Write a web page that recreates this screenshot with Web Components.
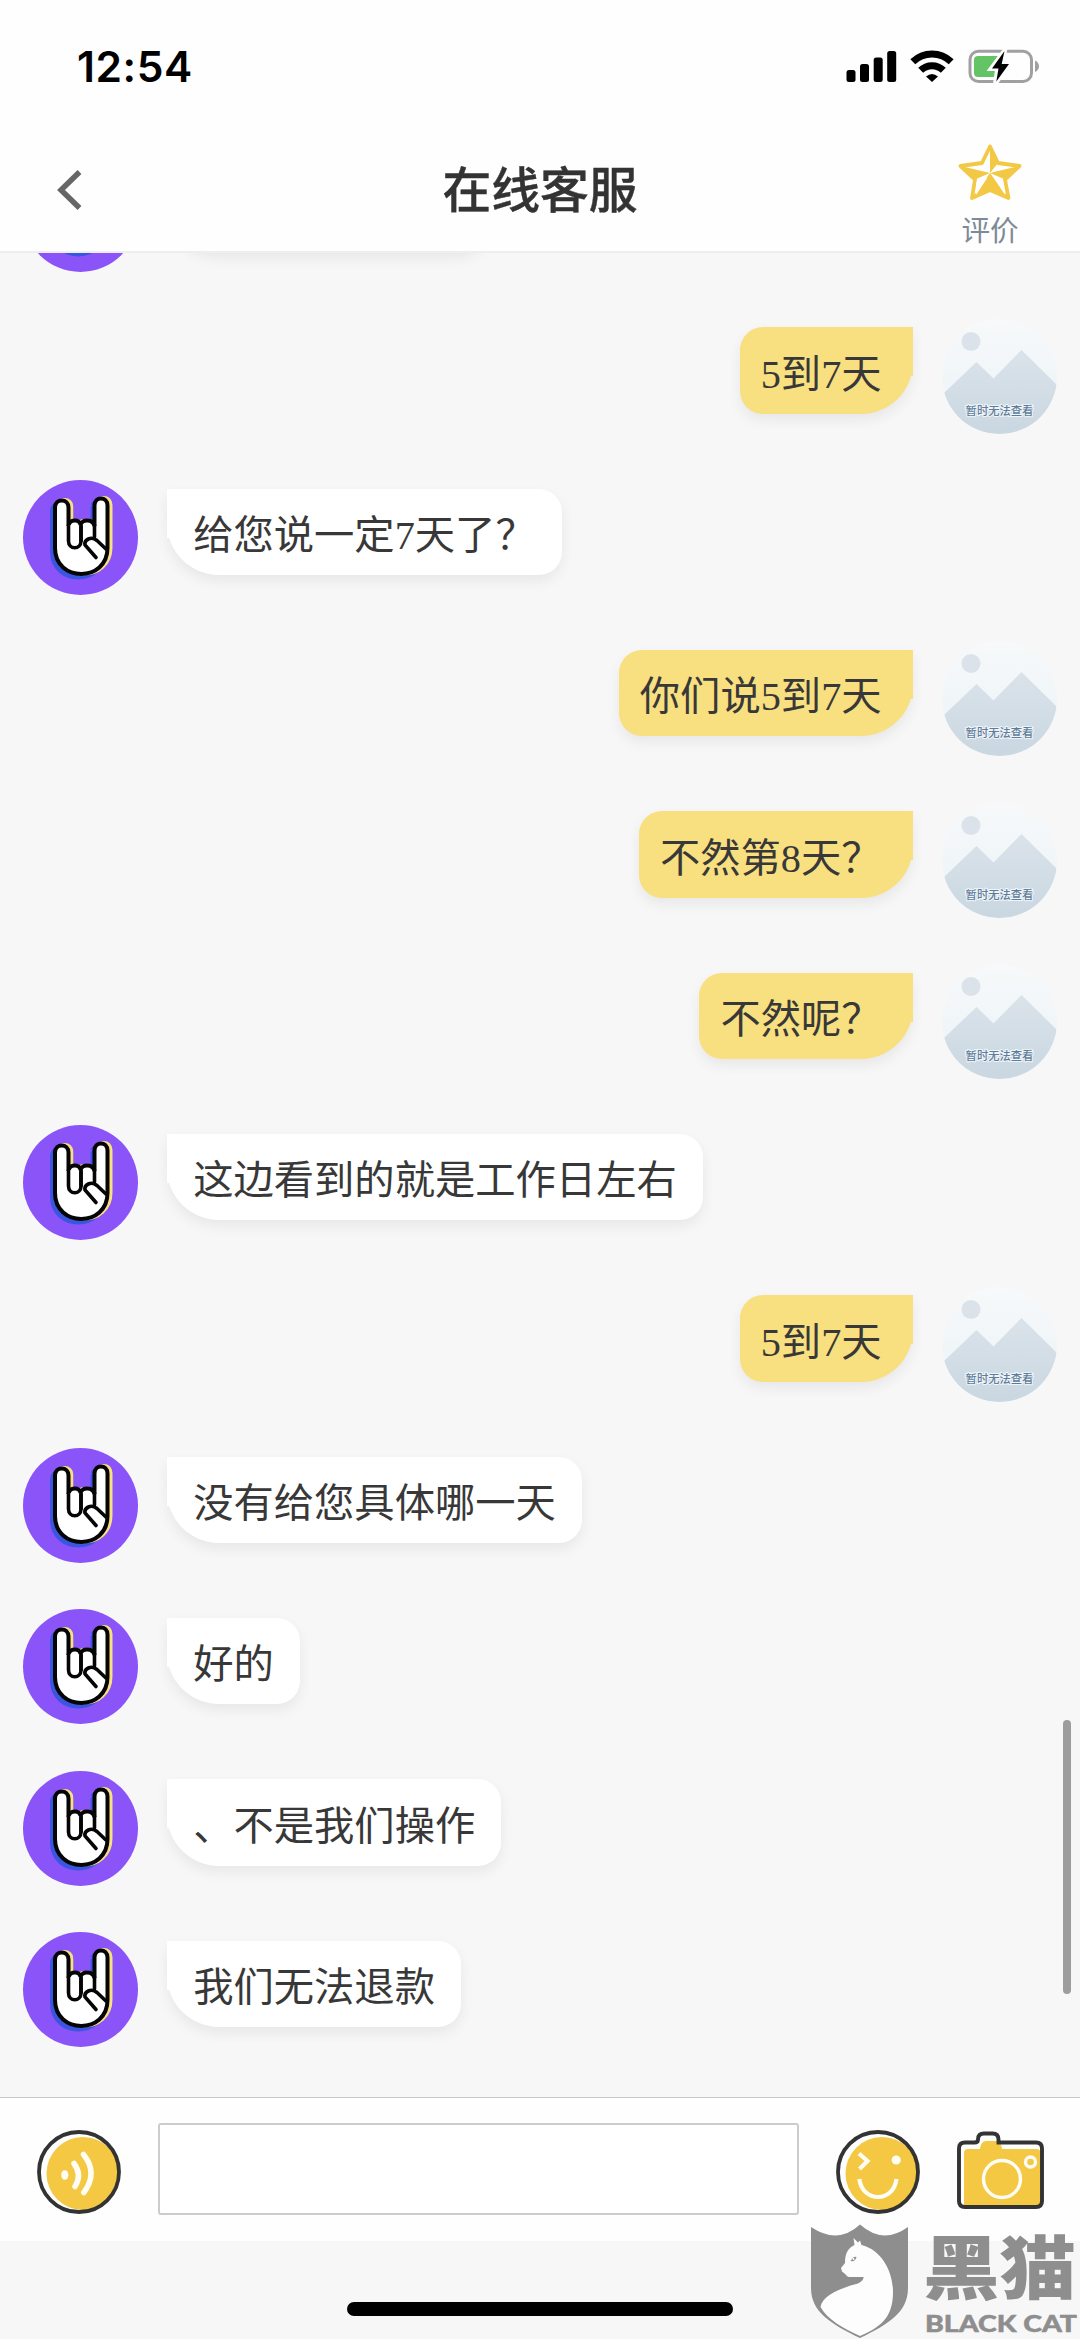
<!DOCTYPE html>
<html lang="zh-CN">
<head>
<meta charset="utf-8">
<title>在线客服</title>
<style>
html,body{margin:0;padding:0;background:#f7f7f7}
body{width:1080px;height:2339px;overflow:hidden}
</style>
</head>
<body>
<chat-app></chat-app>
<script>
function define(name, html) {
  customElements.define(name, class extends HTMLElement {
    constructor() {
      super();
      this.attachShadow({mode: 'open'}).innerHTML = html;
    }
  });
}

define('status-bar', `
<style>
:host{display:flex;justify-content:space-between;height:132px;box-sizing:border-box;padding:0 40px 0 77px;background:#fefefe}
time{font:600 42.5px/52px Inter,sans-serif;color:#000;margin-top:41px;letter-spacing:.55px}
svg{display:block;margin-top:46px}
</style>
<time>12:54</time>
<svg width="196" height="42" viewBox="844 46 196 42">
  <rect x="846.5" y="70" width="9" height="12" rx="2.5"/><rect x="860" y="64" width="9" height="18" rx="2.5"/>
  <rect x="873.7" y="57.5" width="9" height="24.5" rx="2.5"/><rect x="887.2" y="51" width="9" height="31" rx="2.5"/>
  <g fill="none" stroke="#000" stroke-width="7">
    <path d="M912.8 61.800A27.500 27.500 0 0 1 951.200 61.800"/><path d="M920.7 70.300A16 16 0 0 1 943.3 70.300"/>
  </g>
  <path d="M926 76.500Q932 71.500 938 76.500L932 82Z"/>
  <rect x="970" y="51.200" width="61.5" height="30.3" rx="8.500" fill="none" stroke="#a09fa1" stroke-width="3"/>
  <path d="M1035 60.500Q1039 62.500 1039 66.200T1035 72Z" fill="#a09fa1"/>
  <path d="M978 56H1002V77H978Q974 77 974 73V60Q974 56 978 56Z" fill="#63c466"/>
  <path d="M1004.5 48.500L988.500 70H996L994 84H996.500L1012 63H1003.500L1006.500 48.500Z" fill="#fefefe" stroke="#fefefe" stroke-width="2"/>
  <path d="M1004.500 51L992 68.500H998.500L996.300 81.500L1009 64H1001.700Z"/>
</svg>`);

define('nav-bar', `
<style>
:host{display:flex;justify-content:space-between;height:121px;box-sizing:border-box;background:#fefefe;border-bottom:2px solid #efeeee}
.side{width:181px;flex:none}
.back{display:block;margin:36px 0 0 54px}
h1{font:500 48.8px/72px "Noto Sans CJK SC",sans-serif;color:#333;margin:18.500px 0 0;-webkit-text-stroke:.4px #333}
.rate{display:flex;flex-direction:column;align-items:center}
.rate svg{display:block;margin:9px 0 0 2px}
.rate span{font:400 28.600px/34px "Noto Sans CJK SC",sans-serif;color:#7e8a97;margin:11px 0 0 1px}
</style>
<div class="side"><svg class="back" width="32" height="44" viewBox="54 168 32 44"><path d="M79.500 172L61 190L79.500 208" fill="none" stroke="#666" stroke-width="5.500"/></svg></div>
<h1>在线客服</h1>
<div class="side rate">
<svg width="68" height="60" viewBox="956 141 68 60">
  <path d="M990 146.500L998 163L1019.500 166L1005 179.500L1008.500 198L990 190L972 198L975 179.500L960.500 166L982 163Z" fill="#fff" stroke="#f2c845" stroke-width="3.800" stroke-linejoin="round"/>
  <path d="M990 146.500V173L998 163ZM1019.500 166L990 173L1005 179.500ZM1008.500 198L990 173V190ZM972 198L990 173V190ZM960.500 166L975 179.500L990 173Z" fill="#f2c845"/>
  <path d="M976 195L987.500 177.500L976.500 182ZM1005 195L992 175L1003 181.500Z" fill="#fff"/>
</svg>
<span>评价</span></div>`);

define('agent-avatar', `
<style>:host{display:block;width:115px;height:115px;flex:none}svg{display:block}</style>
<svg width="115" height="115" viewBox="0 0 115 115">
  <defs><path id="h" d="M32 27.500C32 18 45.500 18 45.500 27.500V46C46 39 57 38.500 57.500 45C59 38.500 70 39 71.500 46V25.500C71.500 16 84.500 16 84.500 25.500V68C84.500 102.500 32 102.500 32 68Z"/></defs>
  <circle cx="57.500" cy="57.500" r="57.500" fill="#8b54f8"/>
  <use href="#h" transform="translate(-3 3.500)" fill="#3a55e0" stroke="#3a55e0" stroke-width="4"/>
  <use href="#h" transform="translate(3 -.5)" fill="#f8df84" stroke="#f8df84" stroke-width="4"/>
  <path d="M50.500 25V41Q54 38 57 40Q63 36 70 41V25Z" fill="#8b54f8"/>
  <path d="M67.500 27V41H70V25Z" fill="#3a55e0"/>
  <use href="#h" fill="#fff" stroke="#050505" stroke-width="4"/>
  <g fill="#fff" stroke="#050505" stroke-width="3.600" stroke-linecap="round">
    <path d="M45.500 45V61C45.500 70 58 70 58 61V46"/>
    <path d="M58 46V61M71.500 45V57"/>
    <path d="M84 70L74 60.500C68 55.500 61 60 62 65L73 77.500"/>
  </g>
</svg>`);

define('user-avatar', `
<style>:host{display:block;width:115px;height:115px;flex:none}svg{display:block}</style>
<svg width="115" height="115" viewBox="0 0 115 115">
  <defs>
    <linearGradient id="s" x2="0" y2="1"><stop offset="0" stop-color="#f7f9fa"/><stop offset=".6" stop-color="#eff5f8"/></linearGradient>
    <linearGradient id="m" x2="0" y2="1"><stop offset="0" stop-color="#dbe3ea"/><stop offset="1" stop-color="#c9d7e1"/></linearGradient>
    <clipPath id="c"><circle cx="57.500" cy="57.500" r="57.500"/></clipPath>
  </defs>
  <g clip-path="url(#c)">
    <rect width="115" height="115" fill="url(#s)"/>
    <circle cx="29" cy="22.500" r="9.500" fill="#dbe2ea"/>
    <path d="M0 76L34.500 43L51.500 59.500L79.500 31L115 66V115H0Z" fill="url(#m)"/>
  </g>
  <text x="57.500" y="96" text-anchor="middle" font-family="Noto Sans CJK SC,sans-serif" font-size="11.300" font-weight="500" fill="#5f7d99" stroke="#f0f5f9" stroke-width="2" paint-order="stroke">暂时无法查看</text>
</svg>`);

define('chat-message', `
<style>
:host{display:flex;align-items:flex-start;gap:29px;height:161.350px;box-sizing:border-box;padding:0 23px}
:host([from=user]){flex-direction:row-reverse}
.bubble{position:relative;height:86.500px;box-sizing:border-box;margin-top:8.500px;padding:4.500px 26.200px 0;border-radius:0 23px 23px 52px;background:#fff;box-shadow:0 6px 14px rgba(0,0,0,.065);font:400 40.300px/85px "Liberation Serif","Noto Sans CJK SC",serif;color:#383838;white-space:nowrap}
.bubble::before{content:"";position:absolute;top:0;left:0;width:10px;height:49px;background:inherit}
:host([from=user]) .bubble{background:#f8df80;border-radius:23px 0 52px 23px;padding:4.500px 31.400px 0 21px}
:host([from=user]) .bubble::before{left:auto;right:0}
:host([clipped]) .bubble{width:316px}
:host([from=user]) agent-avatar,:host(:not([from=user])) user-avatar{display:none}
</style>
<agent-avatar></agent-avatar><user-avatar></user-avatar>
<div class="bubble"><slot></slot></div>`);

define('chat-list', `
<style>
:host{display:block;position:relative;height:1844px;overflow:hidden;background:#f7f7f7}
.rows{margin-top:-95.700px}
.bar{position:absolute;right:9px;top:1467px;width:8px;height:274px;border-radius:4px;background:#9d9d9d}
</style>
<div class="rows"><slot></slot></div><div class="bar"></div>`);

define('input-bar', `
<style>
:host{display:flex;align-items:flex-start;height:144px;box-sizing:border-box;border-top:1px solid #c9c9c9;background:#fefefe;padding-left:34px}
svg{display:block;flex:none;margin-top:29px}
.field{width:641px;height:92px;box-sizing:border-box;border:2px solid #ccc;border-radius:3px;background:#fff;margin:25px 34px 0 34px}
.cam{margin-left:30px}
</style>
<svg width="90" height="90" viewBox="34 2127 90 90">
  <circle cx="83" cy="2173.500" r="36.500" fill="#f4c843"/>
  <circle cx="79" cy="2172" r="40" fill="none" stroke="#333" stroke-width="3.800"/>
  <ellipse cx="64.800" cy="2175" rx="3.600" ry="4.800" fill="#fffdf4"/>
  <g fill="none" stroke="#fffdf4" stroke-width="5.500" stroke-linecap="round"><path d="M74 2163.500Q82.500 2175 75 2186.500"/><path d="M83.500 2154.500Q98.500 2173 83.800 2192.500"/></g>
</svg>
<div class="field"></div>
<svg width="90" height="90" viewBox="833.500 2127 90 90">
  <circle cx="882.500" cy="2173.500" r="36.500" fill="#f4c843"/>
  <circle cx="878.500" cy="2172" r="40" fill="none" stroke="#333" stroke-width="3.800"/>
  <g fill="none" stroke="#fffdf4" stroke-width="4.200"><path d="M859.500 2153.500L868 2161L860 2169"/><path d="M859.800 2179C863 2203 894 2203 897 2179"/></g>
  <circle cx="896.700" cy="2160" r="4.600" fill="#fffdf4"/>
</svg>
<svg class="cam" width="94" height="90" viewBox="953 2127 94 90">
  <path d="M968 2149H980Q981 2141 986 2141H996Q1001 2141 1002 2149H1036Q1041 2149 1041 2154V2205H964V2153Q964 2149 968 2149Z" fill="#f4c843"/>
  <path d="M965 2142.500H974.500Q978 2142.500 978 2139.500Q978 2133.500 984 2133.500H992.500Q998.500 2133.500 998.500 2139.500V2142.500H1036Q1042 2142.500 1042 2148.500V2201Q1042 2207 1036 2207H965Q959 2207 959 2201V2148.500Q959 2142.500 965 2142.500Z" fill="none" stroke="#333" stroke-width="3.900"/>
  <g fill="none" stroke="#fffdf4" stroke-width="3.400"><circle cx="1002" cy="2179" r="18.500"/><circle cx="1030.500" cy="2162" r="5"/></g>
</svg>`);

define('home-area', `
<style>
:host{display:flex;justify-content:center;height:98px;background:#f7f7f7}
i{display:block;width:386px;height:14px;border-radius:7px;background:#000;margin-top:61px}
</style><i></i>`);

define('black-cat-mark', `
<style>
:host{position:absolute;left:810px;top:2223px;display:block;width:270px;height:116px}
svg{display:block;overflow:visible}
</style>
<svg width="270" height="116" viewBox="810 2223 270 116">
  <path d="M811 2227Q838 2245 860 2224.500Q883 2245 908 2227V2288C908 2312 889 2324 860 2338C831 2324 811 2312 811 2288Z" fill="#8f8e8f"/>
  <path d="M853.500 2238L858 2242.500L860 2240.500L861.500 2245C882 2250 893 2272 893 2292C893 2313 885 2326 860 2336C843 2328 828 2320 820.500 2307C822 2296 840 2288 858 2283.500Q864 2280 863.500 2277H849C847 2277 846 2274 842 2271.500L841 2268L845 2263C845 2253 848 2248 854.500 2245Z" fill="#fdfdfd"/>
  <path d="M850.500 2261Q854 2255.500 856.500 2257Q855.500 2262 850.500 2261Z" fill="#8f8e8f"/><circle cx="853.500" cy="2259" r="1" fill="#fff"/>
  <g fill="#8f8e8f">
    <text transform="translate(923 2294) scale(1.110 1)" font-family="Noto Sans CJK SC,sans-serif" font-weight="900" font-size="69">黑猫</text>
    <text x="925" y="2331.500" font-family="Lato,sans-serif" font-weight="900" font-size="23.500" textLength="152" lengthAdjust="spacingAndGlyphs" stroke="#8f8e8f" stroke-width=".5">BLACK CAT</text>
  </g>
</svg>`);

define('chat-app', `
<style>:host{display:flex;flex-direction:column;position:relative;width:1080px;height:2339px;overflow:hidden}
status-bar,nav-bar,chat-list,input-bar,home-area{flex:none}</style>
<status-bar></status-bar>
<nav-bar></nav-bar>
<chat-list>
  <chat-message clipped></chat-message>
  <chat-message from="user">5到7天</chat-message>
  <chat-message>给您说一定7天了？</chat-message>
  <chat-message from="user">你们说5到7天</chat-message>
  <chat-message from="user">不然第8天？</chat-message>
  <chat-message from="user">不然呢？</chat-message>
  <chat-message>这边看到的就是工作日左右</chat-message>
  <chat-message from="user">5到7天</chat-message>
  <chat-message>没有给您具体哪一天</chat-message>
  <chat-message>好的</chat-message>
  <chat-message>、不是我们操作</chat-message>
  <chat-message>我们无法退款</chat-message>
</chat-list>
<input-bar></input-bar>
<home-area></home-area>
<black-cat-mark></black-cat-mark>`);
</script>
</body>
</html>
